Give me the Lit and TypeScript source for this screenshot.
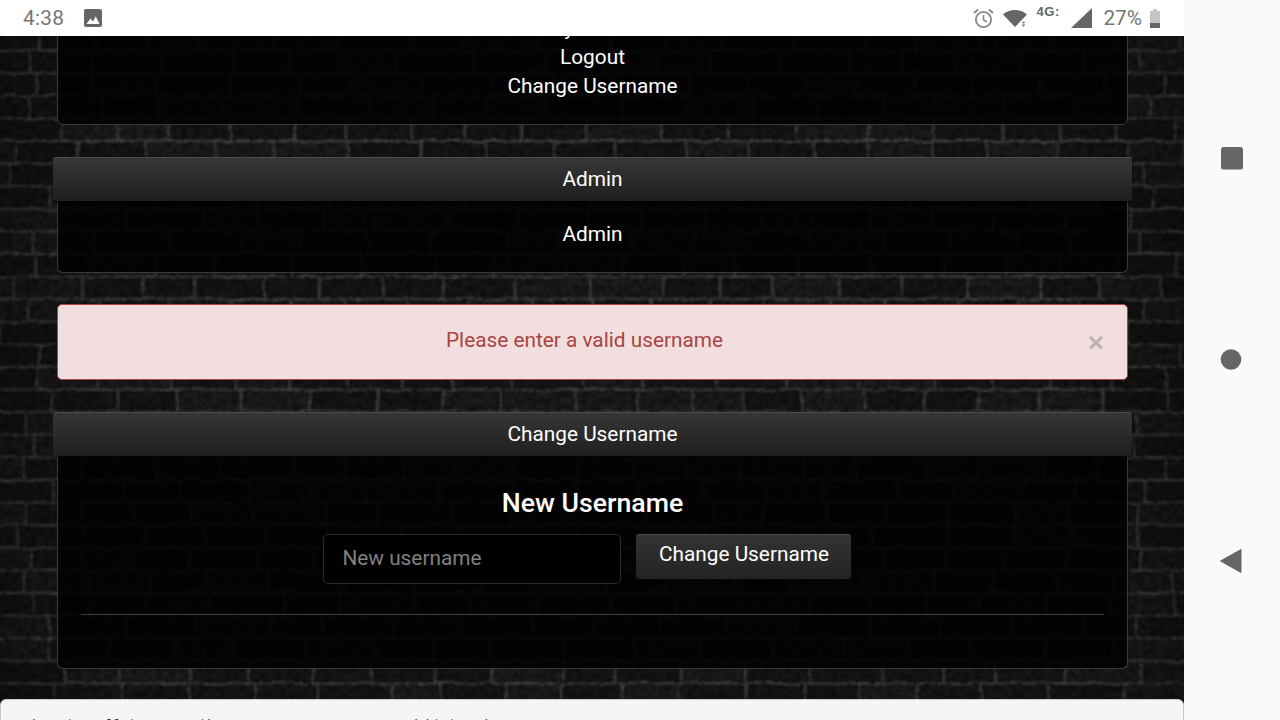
import { LitElement, html, css, svg } from "lit";
import { customElement } from "lit/decorators.js";

function rng(seed: number) {
  let s = seed;
  return () => {
    s = (s * 1664525 + 1013904223) % 4294967296;
    return s / 4294967296;
  };
}

function buildBricks() {
  const r = rng(42);
  const rects: { x: number; y: number; w: number; h: number; v: number }[] = [];
  let y = -8;
  const rowH = 22.6;
  while (y < 700) {
    let x = -r() * 50;
    while (x < 1190) {
      const w = 50 + r() * 26;
      rects.push({ x, y, w, h: rowH, v: 21 + Math.floor(r() * 8) });
      x += w;
    }
    y += rowH;
  }
  return rects;
}

const bricks = buildBricks();

@customElement("app-root")
export class AppRoot extends LitElement {
  static styles = css`
    :host {
      display: grid;
      grid-template-columns: 1184px 96px;
      grid-template-rows: 36px 684px;
      width: 1280px;
      height: 720px;
      overflow: hidden;
      font-family: Roboto, "Liberation Sans", sans-serif;
      font-size: 20.8px;
      line-height: 29px;
      color: #fff;
      background: #fafafa;
    }
    .status {
      grid-column: 1;
      grid-row: 1;
      background: #fff;
      display: flex;
      align-items: center;
      color: #757575;
      padding: 0 24px 0 23px;
      box-sizing: border-box;
    }
    .time { width: 61px; font-size: 20.8px; letter-spacing: 0.3px; }
    .spacer { flex: 1; }
    .status svg { display: block; flex: none; }
    .g4 {
      font-size: 13px;
      font-weight: 700;
      line-height: 12px;
      width: 25px;
      margin: -12px 10px 0 9px;
      color: #666;
      letter-spacing: 0.6px;
      font-family: "Liberation Sans", sans-serif;
    }
    .pct { margin: 0 8px 0 11px; color: #757575; font-size: 20.8px; }
    .nav {
      grid-column: 2;
      grid-row: 1 / span 2;
      background: #fafafa;
      position: relative;
    }
    .nav svg { position: absolute; left: 0; top: 0; }
    .main {
      grid-column: 1;
      grid-row: 2;
      position: relative;
      overflow: hidden;
      background: #141414;
    }
    .bricks { position: absolute; inset: 0; }
    .page {
      position: relative;
      padding: 0 56px 0 57px;
      display: flex;
      flex-direction: column;
      text-align: center;
    }
    .panel {
      background: rgba(0, 0, 0, 0.84);
      border: 1px solid #3a3a3a;
      border-radius: 6px;
    }
    .panel.first { margin-top: -40px; padding: 17px 0 23px; }
    .head {
      margin: 32px -4px 0;
      height: 44px;
      line-height: 43px;
      border-radius: 3px;
      border-top: 1px solid #4c4c4c;
      box-sizing: border-box;
      background: linear-gradient(#363636, #1f1f1f);
      box-shadow: 0 1px 2px rgba(0, 0, 0, 0.7);
      position: relative;
    }
    .panel.body { border-top: 0; border-radius: 0 0 6px 6px; }
    .admin { padding: 19px 0 23px; }
    .alert {
      margin-top: 31px;
      height: 76px;
      box-sizing: border-box;
      background: #f2dede;
      border: 1px solid #a94442;
      border-radius: 5px;
      color: #a94442;
      padding: 21px 35px 0 19px;
      position: relative;
    }
    .close {
      position: absolute;
      right: 23px;
      top: 23px;
      font-size: 28px;
      font-weight: 700;
      line-height: 30px;
      color: #bfb2b2;
      font-family: "Liberation Sans", sans-serif;
    }
    .form { padding: 32px 23px 53px; }
    h3 {
      margin: 0 0 16px;
      font-size: 26.7px;
      font-weight: 500;
      line-height: 31px;
      height: 30px;
    }
    .row {
      display: flex;
      justify-content: center;
      gap: 15px;
      margin-right: 12px;
      align-items: flex-start;
    }
    input {
      width: 298px;
      height: 50px;
      box-sizing: border-box;
      background: #000;
      border: 1px solid #2c2c2c;
      border-radius: 5px;
      padding: 0 19px 3px;
      color: #fff;
      font: inherit;
      outline: none;
    }
    input::placeholder { color: #808080; opacity: 1; }
    button {
      width: 215px;
      height: 44px;
      box-sizing: border-box;
      color: #fff;
      font: inherit;
      padding: 0 0 4px 2px;
      border: 0;
      border-top: 1px solid #4c4c4c;
      border-radius: 3px;
      background: linear-gradient(#333, #232323);
      box-shadow: 0 1px 1px rgba(80, 80, 80, 0.5);
    }
    hr {
      margin: 30px 0 0;
      border: 0;
      border-top: 1px solid #3c3c3c;
      height: 0;
    }
    .console {
      position: absolute;
      left: 0;
      top: 663px;
      width: 1184px;
      height: 60px;
      box-sizing: border-box;
      background: #f5f5f5;
      border: 1px solid #ccc;
      border-radius: 6px;
      padding: 16px 19px;
      font-family: "Liberation Mono", monospace;
      font-size: 13px;
      line-height: 18px;
      color: #333;
      text-align: left;
      white-space: pre;
    }
  `;

  renderBricks() {
    const mortar = bricks
      .map((b) => `M${b.x.toFixed(1)} ${b.y.toFixed(1)}h${b.w.toFixed(1)}M${b.x.toFixed(1)} ${b.y.toFixed(1)}v${b.h}`)
      .join("");
    return html`<svg class="bricks" width="1184" height="684" viewBox="0 0 1184 684">
      <defs>
        <filter id="rough" x="0" y="0" width="100%" height="100%">
          <feTurbulence type="fractalNoise" baseFrequency="0.05" numOctaves="2" seed="7" result="n" />
          <feDisplacementMap in="SourceGraphic" in2="n" scale="4" />
          <feGaussianBlur stdDeviation="0.9" />
        </filter>
        <filter id="grain" x="0" y="0" width="100%" height="100%">
          <feTurbulence type="fractalNoise" baseFrequency="0.16" numOctaves="2" seed="11" />
          <feGaussianBlur stdDeviation="0.6" />
          <feColorMatrix values="0 0 0 0 0  0 0 0 0 0  0 0 0 0 0  0.9 0 0 0 -0.28" />
        </filter>
        <linearGradient id="edge">
          <stop offset="0" stop-color="#000" stop-opacity="0.28"></stop>
          <stop offset="0.1" stop-color="#000" stop-opacity="0"></stop>
          <stop offset="0.9" stop-color="#000" stop-opacity="0"></stop>
          <stop offset="1" stop-color="#000" stop-opacity="0.28"></stop>
        </linearGradient>
      </defs>
      <g filter="url(#rough)">
        ${bricks.map(
          (b) => svg`<rect x=${b.x} y=${b.y} width=${b.w} height=${b.h} fill="rgb(${b.v},${b.v},${b.v})"></rect>`
        )}
        <path d=${mortar} stroke="#444" stroke-width="1.8" fill="none"></path>
      </g>
      <rect width="1184" height="684" filter="url(#grain)"></rect>
      <rect width="1184" height="684" fill="url(#edge)"></rect>
    </svg>`;
  }

  render() {
    return html`
      <div class="status">
        <span class="time">4:38</span>
        <svg width="18" height="18" viewBox="0 0 18 18">
          <rect width="18" height="18" rx="2" fill="#666"></rect>
          <path d="M2.5 15 L6.5 9.5 L9 12.5 L11.8 7.5 L15.5 15 Z" fill="#fff"></path>
        </svg>
        <span class="spacer"></span>
        <svg width="21" height="21" viewBox="0 0 21 21" style="margin-right:9px">
          <circle cx="10.5" cy="11.5" r="7.6" fill="none" stroke="#8a8a8a" stroke-width="1.9"></circle>
          <path d="M10.5 7v5l3.4 2" fill="none" stroke="#8a8a8a" stroke-width="1.6"></path>
          <path d="M1 5l4-3.4M20 5l-4-3.4" stroke="#8a8a8a" stroke-width="2" fill="none"></path>
        </svg>
        <svg width="24" height="17" viewBox="0 0 24 17">
          <path d="M0 4.5 C6 -1.5 18 -1.5 24 4.5 L12 17 Z" fill="#666"></path>
          <path d="M17 11h7v6h-7z" fill="#fff"></path>
          <path d="M18.5 11.8h4l-2 2z M18.5 14.4h4l-2 2.3z" fill="#777"></path>
        </svg>
        <span class="g4">4G:</span>
        <svg width="21" height="20" viewBox="0 0 21 20"><path d="M0 20 L21 0 V20 Z" fill="#666"></path></svg>
        <span class="pct">27%</span>
        <svg width="10" height="19" viewBox="0 0 10 19">
          <path d="M3 0h4v2h3v17H0V2h3z" fill="#c4c4c4"></path>
          <rect y="14" width="10" height="5" fill="#666"></rect>
        </svg>
      </div>

      <div class="nav">
        <svg width="96" height="720" viewBox="0 0 96 720">
          <rect x="37" y="147" width="22" height="22.5" rx="2.5" fill="#666"></rect>
          <circle cx="47" cy="359.5" r="10.3" fill="#666"></circle>
          <path d="M36.5 561 L57 549.5 V572.5 Z" fill="#666" stroke="#666" stroke-linejoin="round"></path>
        </svg>
      </div>

      <div class="main">
        ${this.renderBricks()}
        <div class="page">
          <div class="panel first">
            <div>My Profile</div>
            <div>Logout</div>
            <div>Change Username</div>
          </div>

          <div class="head">Admin</div>
          <div class="panel body admin">Admin</div>

          <div class="alert">
            Please enter a valid username
            <span class="close">×</span>
          </div>

          <div class="head">Change Username</div>
          <div class="panel body form">
            <h3>New Username</h3>
            <div class="row">
              <input placeholder="New username" />
              <button>Change Username</button>
            </div>
            <hr />
          </div>
        </div>
        <div class="console">admon to sell to users then runs near an error an debt tuned</div>
      </div>
    `;
  }
}
